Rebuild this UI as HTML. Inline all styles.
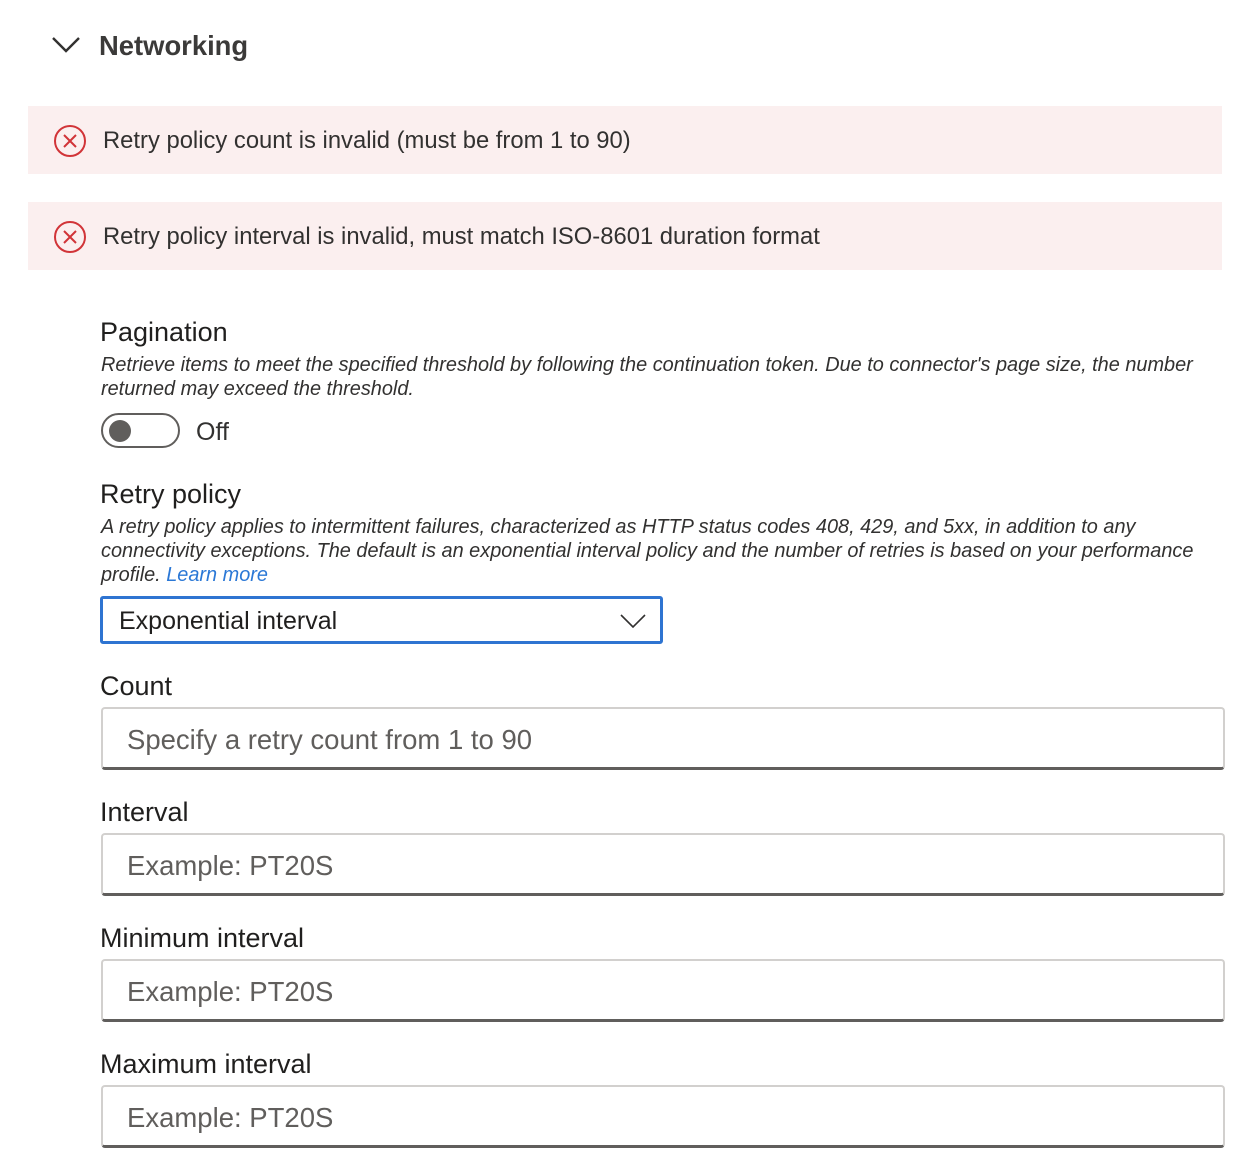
<!DOCTYPE html>
<html><head><meta charset="utf-8"><style>
*{margin:0;padding:0;box-sizing:border-box}
body{width:1244px;height:1170px;background:#fff;font-family:"Liberation Sans",sans-serif;color:#323130;position:relative;overflow:hidden}
.a{position:absolute;white-space:nowrap}
.err{position:absolute;left:28px;width:1194px;height:68px;background:#fbefef}
.err svg{position:absolute;left:25px;top:18px}
.err span{position:absolute;left:75px;top:21px;font-size:23.8px;color:#323130}
.h{font-size:27px;color:#201f1e}
.d{font-size:19.9px;font-style:italic;color:#323130;line-height:24px}
.inp{position:absolute;left:101px;width:1124px;height:63px;border:2px solid #d2d0ce;border-bottom:3px solid #605e5c;border-radius:4px}
.inp span{position:absolute;left:24px;top:15px;font-size:27.5px;color:#605e5c}
</style></head><body>
<svg class="a" style="left:51px;top:36px" width="30" height="18" viewBox="0 0 30 18"><path d="M2 2 L15 15 L28 2" fill="none" stroke="#323130" stroke-width="2.4"/></svg>
<div class="a" style="left:99px;top:30px;font-size:27.4px;font-weight:bold;color:#3b3a39">Networking</div>

<div class="err" style="top:106px"><svg width="34" height="34" viewBox="0 0 34 34"><circle cx="17" cy="17" r="15" fill="none" stroke="#d13438" stroke-width="2"/><path d="M11 11L23 23M23 11L11 23" stroke="#d13438" stroke-width="2"/></svg><span>Retry policy count is invalid (must be from 1 to 90)</span></div>
<div class="err" style="top:202px"><svg width="34" height="34" viewBox="0 0 34 34"><circle cx="17" cy="17" r="15" fill="none" stroke="#d13438" stroke-width="2"/><path d="M11 11L23 23M23 11L11 23" stroke="#d13438" stroke-width="2"/></svg><span>Retry policy interval is invalid, must match ISO-8601 duration format</span></div>

<div class="a h" style="left:100px;top:317px">Pagination</div>
<div class="a d" style="left:101px;top:353px">Retrieve items to meet the specified threshold by following the continuation token. Due to connector's page size, the number<br>returned may exceed the threshold.</div>
<div class="a" style="left:101px;top:413px;width:79px;height:35px;border:2px solid #605e5c;border-radius:18px"><div style="position:absolute;left:6px;top:5px;width:22px;height:22px;border-radius:50%;background:#605e5c"></div></div>
<div class="a" style="left:196px;top:418px;font-size:25px;color:#323130">Off</div>

<div class="a h" style="left:100px;top:479px">Retry policy</div>
<div class="a d" style="left:101px;top:515px">A retry policy applies to intermittent failures, characterized as HTTP status codes 408, 429, and 5xx, in addition to any<br>connectivity exceptions. The default is an exponential interval policy and the number of retries is based on your performance<br>profile. <span style="color:#2b78d6">Learn more</span></div>
<div class="a" style="left:100px;top:596px;width:563px;height:48px;border:3px solid #2e74d1;border-radius:3px">
<span style="position:absolute;left:16px;top:8px;font-size:25px;color:#201f1e">Exponential interval</span>
<svg style="position:absolute;right:14px;top:15px" width="26" height="14" viewBox="0 0 26 14"><path d="M1 1L13 13L25 1" fill="none" stroke="#323130" stroke-width="1.6"/></svg></div>

<div class="a h" style="left:100px;top:671px">Count</div>
<div class="inp" style="top:707px"><span>Specify a retry count from 1 to 90</span></div>
<div class="a h" style="left:100px;top:797px">Interval</div>
<div class="inp" style="top:833px"><span>Example: PT20S</span></div>
<div class="a h" style="left:100px;top:923px">Minimum interval</div>
<div class="inp" style="top:959px"><span>Example: PT20S</span></div>
<div class="a h" style="left:100px;top:1049px">Maximum interval</div>
<div class="inp" style="top:1085px"><span>Example: PT20S</span></div>
</body></html>
